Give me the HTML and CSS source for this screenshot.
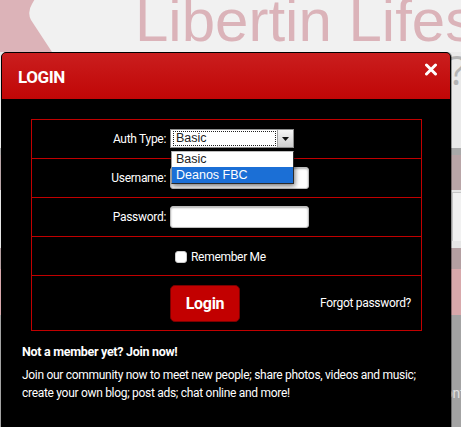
FILE: index.html
```html
<!DOCTYPE html>
<html lang="en">
<head>
<meta charset="utf-8">
<title>Login</title>
<link rel="stylesheet" href="styles.css">
</head>
<body>
<div class="site">
  <header class="site-header">
    <div class="brand">
      <svg class="brand-tab" width="135" height="52" viewBox="0 0 135 52" aria-hidden="true">
        <rect x="0" y="0" width="135" height="52" fill="#dcb3b8"/>
        <path d="M40 -10 L135 -10 L135 52 L52 52 L31 20 Q27 12 32 4 Z" fill="#f1f1f1"/>
      </svg>
      <div class="brand-title">Libertin Lifestyle</div>
    </div>
    <div class="brand-sub">?</div>
  </header>
  <div class="band band-a"></div>
  <div class="band band-b"></div>
  <div class="search-area"><div class="search-box"></div></div>
  <div class="band band-c"></div>
  <div class="band band-d"></div>
  <div class="content-area"><span class="content-text">Contribute</span></div>
</div>

<div class="modal">
  <div class="modal-header">
    <h2 class="modal-title">LOGIN</h2>
    <button class="modal-close" aria-label="Close">
      <svg width="14" height="13" viewBox="0 0 14 13" aria-hidden="true">
        <path d="M2.5 2 L11.5 11 M11.5 2 L2.5 11" stroke="#fff" stroke-width="3" stroke-linecap="round"/>
      </svg>
    </button>
  </div>
  <div class="modal-body">
    <form class="login-form">
      <div class="form-row">
        <label class="form-label">Auth Type:</label>
        <div class="form-field">
          <div class="select-wrap">
            <div class="select">
              <span class="select-value">Basic</span>
              <span class="select-btn">
                <svg width="7" height="4" viewBox="0 0 7 4" aria-hidden="true"><path d="M0 0 H7 L3.5 4 Z" fill="#111"/></svg>
              </span>
            </div>
            <ul class="select-list">
              <li class="select-option">Basic</li>
              <li class="select-option is-active">Deanos FBC</li>
            </ul>
          </div>
        </div>
      </div>
      <div class="form-row">
        <label class="form-label">Username:</label>
        <div class="form-field"><input class="text-input" type="text"></div>
      </div>
      <div class="form-row">
        <label class="form-label">Password:</label>
        <div class="form-field"><input class="text-input" type="password"></div>
      </div>
      <div class="form-row">
        <span class="form-label"></span>
        <div class="form-field">
          <label class="remember"><input class="check" type="checkbox">Remember Me</label>
        </div>
      </div>
      <div class="form-row form-row-last">
        <span class="form-label"></span>
        <div class="form-field form-actions">
          <button class="btn-login" type="button">Login</button>
          <a class="forgot">Forgot password?</a>
        </div>
      </div>
    </form>
    <div class="join">
      <p class="join-title">Not a member yet? Join now!</p>
      <p class="join-text">Join our community now to meet new people; share photos, videos and music; create your own blog; post ads; chat online and more!</p>
    </div>
  </div>
</div>
</body>
</html>
```
FILE: styles.css
```css
html, body {
  margin: 0;
  padding: 0;
}
body {
  width: 461px;
  height: 427px;
  overflow: hidden;
  position: relative;
  background: #a3a3a3;
  font-family: Roboto, "Noto Sans", sans-serif;
  letter-spacing: -0.3px;
}

/* background page */
.site-header {
  height: 148px;
  background: #eaeaea;
  overflow: hidden;
}
.brand {
  display: flex;
  height: 52px;
  background: #f1f1f1;
}
.brand-tab {
  flex: none;
  display: block;
}
.brand-title {
  font-family: "Liberation Sans", Arial, sans-serif;
  font-size: 60px;
  line-height: 52px;
  margin-top: -5px;
  letter-spacing: 0;
  color: #dbb3b9;
  white-space: nowrap;
}
.brand-sub {
  padding-left: 449px;
  font-family: "Open Sans", sans-serif;
  font-size: 40px;
  line-height: 36px;
  color: #b4b4b4;
}
.band-a { height: 7px; background: #a9a9a9; }
.band-b { height: 35px; background: #b9a5a7; }
.search-area {
  height: 58px;
  background: #e6e6e6;
  padding-left: 452px;
  box-sizing: border-box;
  padding-top: 2px;
}
.search-box {
  height: 48px;
  border-left: 1px solid #c6c6c6;
  border-top: 1px solid #c6c6c6;
  background: #f1f1f1;
}
.band-c { height: 21px; background: #b49fa1; }
.band-d { height: 46px; background: #d8a8ab; }
.content-area {
  height: 112px;
  background: #a3a3a3;
  padding: 68px 0 0 436px;
  box-sizing: border-box;
}
.content-text {
  color: #e0e0e0;
  font-size: 14px;
  white-space: nowrap;
}

/* modal */
.modal {
  position: absolute;
  left: 1px;
  top: 52px;
  width: 450px;
  bottom: -20px;
  box-sizing: border-box;
  border: 1px solid #000;
  border-radius: 5px 5px 0 0;
  background: #000;
  box-shadow: 1px 0 0 rgba(0,0,0,0.35);
  overflow: hidden;
}
.modal-header {
  height: 46px;
  display: flex;
  align-items: center;
  justify-content: space-between;
  padding: 0 12px 0 16px;
  background: linear-gradient(#ca1e1e, #c00606);
}
.modal-title {
  margin: 2px 0 0;
  color: #fff;
  font-size: 17px;
  font-weight: bold;
  letter-spacing: -0.4px;
}
.modal-close {
  align-self: flex-start;
  margin-top: 10px;
  padding: 0;
  border: 0;
  background: none;
  display: block;
  line-height: 0;
}
.modal-body {
  padding: 20px 28px 0 29px;
}

/* form grid */
.login-form {
  border: 1px solid #c10000;
  margin: 0;
}
.form-row {
  display: grid;
  grid-template-columns: 138px 1fr;
  align-items: center;
  height: 38px;
  border-bottom: 1px solid #c10000;
}
.form-row-last {
  height: 54px;
  border-bottom: 0;
}
.form-label {
  color: #fff;
  font-size: 12px;
  text-align: right;
  padding-right: 4px;
}
.form-field {
  display: flex;
  align-items: center;
}

/* select */
.select-wrap {
  position: relative;
}
.select {
  display: flex;
  width: 124px;
  height: 19px;
  box-sizing: border-box;
  border: 1px solid #8d8d8d;
  background: #fff;
  margin-top: -1px;
}
.select-value {
  flex: 1;
  margin: 1px 1px 1px 2px;
  border: 1px dotted #222;
  font-family: "Liberation Sans", Arial, sans-serif;
  font-size: 12.5px;
  line-height: 13px;
  letter-spacing: 0;
  color: #222;
  padding-left: 2px;
}
.select-btn {
  width: 15px;
  flex: none;
  display: flex;
  align-items: center;
  justify-content: center;
  border-left: 1px solid #a0a0a0;
  background: linear-gradient(#f6f6f6, #cfcfcf);
}
.select-list {
  position: absolute;
  left: 1px;
  top: 21px;
  width: 123px;
  margin: 0;
  padding: 0;
  list-style: none;
  background: #fff;
  box-sizing: border-box;
  border: 1px solid #2a2a2a;
  border-top-color: #bdbdbd;
  border-left-color: #9a9a9a;
  box-shadow: 1px 2px 5px rgba(0,0,0,0.55);
  z-index: 2;
}
.select-option {
  font-family: "Liberation Sans", Arial, sans-serif;
  font-size: 12.5px;
  letter-spacing: 0;
  line-height: 15px;
  height: 15px;
  padding-left: 4px;
  color: #222;
}
.select-option.is-active {
  background: #1b6fd6;
  color: #fff;
  height: 16px;
  line-height: 16px;
}

/* inputs */
.text-input {
  width: 139px;
  height: 22px;
  box-sizing: border-box;
  margin: 0;
  border: 1px solid #bdbdbd;
  border-radius: 3px;
  background: #fff;
  box-shadow: inset 0 1px 2px rgba(0,0,0,0.3);
}
.remember {
  display: flex;
  align-items: center;
  color: #fff;
  font-size: 12px;
  margin-top: 2px;
}
.check {
  appearance: none;
  -webkit-appearance: none;
  width: 12px;
  height: 12px;
  margin: 0 4px 0 5px;
  background: #fff;
  border: 1px solid #ccc;
  border-radius: 3px;
  box-sizing: border-box;
}
.form-actions {
  justify-content: space-between;
  padding-right: 10px;
}
.btn-login {
  width: 70px;
  height: 37px;
  border: 1px solid #7a0000;
  border-radius: 5px;
  background: #c20000;
  color: #fff;
  font-family: inherit;
  font-size: 16px;
  font-weight: bold;
  letter-spacing: -0.3px;
  padding: 0;
}
.forgot {
  color: #fff;
  font-size: 12px;
}

/* join */
.join {
  margin-left: -9px;
  padding-top: 13px;
  color: #fff;
}
.join-title {
  margin: 0 0 6px;
  font-weight: bold;
  font-size: 12.5px;
  line-height: 16px;
}
.join-text {
  margin: 0;
  font-size: 12px;
  line-height: 18px;
  width: 400px;
}
```
